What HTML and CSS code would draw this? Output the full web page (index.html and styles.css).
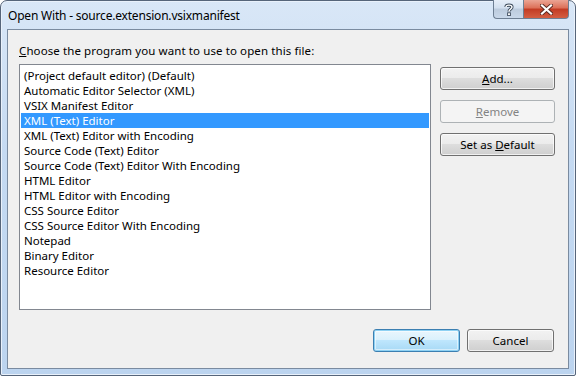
FILE: index.html
```html
<!DOCTYPE html>
<html lang="en">
<head>
    <meta charset="UTF-8">
    <title>Open With</title>
    <link rel="stylesheet" href="styles.css">
</head>
<body>
    <div class="window">
        <div class="titlebar">
            <span class="title">Open With - source.extension.vsixmanifest</span>
            <div class="caption-btns">
                <div class="cap help">
                    <svg width="10" height="13" viewBox="0 0 10 13">
                        <path d="M2 4 C2 1.5 8 1.5 8 4 C8 6 5 6 5 8.5" fill="none" stroke="#3d4b5c" stroke-width="3.2"/>
                        <path d="M2 4 C2 1.5 8 1.5 8 4 C8 6 5 6 5 8.5" fill="none" stroke="#fff" stroke-width="1.4"/>
                        <rect x="3.6" y="9.8" width="2.8" height="2.8" fill="#fff" stroke="#3d4b5c" stroke-width="0.9"/>
                    </svg>
                </div>
                <div class="cap close">
                    <svg width="13" height="11" viewBox="0 0 13 11">
                        <path d="M2 1.5 L11 9.5 M11 1.5 L2 9.5" stroke="#5a2a22" stroke-width="4" stroke-linecap="square"/>
                        <path d="M2 1.5 L11 9.5 M11 1.5 L2 9.5" stroke="#fff" stroke-width="2.2" stroke-linecap="square"/>
                    </svg>
                </div>
            </div>
        </div>

        <div class="client">
            <div class="prompt"><u>C</u>hoose the program you want to use to open this file:</div>

            <div class="main">
                <ul class="listbox">
                    <li>(Project default editor) (Default)</li>
                    <li>Automatic Editor Selector (XML)</li>
                    <li>VSIX Manifest Editor</li>
                    <li class="selected">XML (Text) Editor</li>
                    <li>XML (Text) Editor with Encoding</li>
                    <li>Source Code (Text) Editor</li>
                    <li>Source Code (Text) Editor With Encoding</li>
                    <li>HTML Editor</li>
                    <li>HTML Editor with Encoding</li>
                    <li>CSS Source Editor</li>
                    <li>CSS Source Editor With Encoding</li>
                    <li>Notepad</li>
                    <li>Binary Editor</li>
                    <li>Resource Editor</li>
                </ul>

                <div class="side">
                    <button class="btn"><u>A</u>dd...</button>
                    <button class="btn disabled"><u>R</u>emove</button>
                    <button class="btn">Set as <u>D</u>efault</button>
                </div>
            </div>

            <div class="footer">
                <button class="btn default">OK</button>
                <button class="btn">Cancel</button>
            </div>
        </div>
    </div>
</body>
</html>
```

FILE: styles.css
```css
* {
    margin: 0;
    padding: 0;
    box-sizing: border-box;
}

body {
    width: 576px;
    height: 376px;
    background: #fff;
    font-family: "Noto Sans", "Open Sans", sans-serif;
    font-size: 11.5px;
    color: #000;
    overflow: hidden;
}

.window {
    width: 576px;
    height: 376px;
    border: 1px solid #56657a;
    border-radius: 7px 7px 2px 2px;
    background: linear-gradient(to bottom, #d9e7f7 0%, #c5daf2 40%, #bcd4ef 100%);
    padding: 0 6px 6px 6px;
    display: flex;
    flex-direction: column;
    box-shadow: inset 0 0 0 1px #e9f1fb;
}

.titlebar {
    height: 28px;
    display: flex;
    align-items: flex-start;
}

.title {
    margin-top: 7px;
    margin-left: 1px;
    line-height: 15px;
    font-size: 12px;
    letter-spacing: -0.2px;
}

.caption-btns {
    margin-left: auto;
    display: flex;
    margin-top: -1px;
}

.cap {
    height: 19px;
    border: 1px solid #6e7f93;
    border-top: none;
    display: flex;
    align-items: center;
    justify-content: center;
}

.help {
    width: 30px;
    border-radius: 0 0 0 4px;
    border-right: none;
    background: linear-gradient(to bottom, #e6eef8 0%, #d3e0ef 45%, #bccbdd 50%, #c9d8ea 100%);
}

.close {
    width: 46px;
    border-radius: 0 0 4px 0;
    background: linear-gradient(to bottom, #eba594 0%, #dc6f57 45%, #c23b23 50%, #d45e42 100%);
}

.client {
    flex: 1;
    background: #f0f0f0;
    border: 1px solid #7a8ba0;
    padding: 13px 13px 0 11px;
    display: flex;
    flex-direction: column;
}

.prompt {
    line-height: 15px;
    letter-spacing: 0.1px;
}

.main {
    display: flex;
    margin-top: 6px;
}

.listbox {
    list-style: none;
    width: 412px;
    height: 246px;
    background: #fff;
    border: 1px solid #828790;
    padding: 3px 1px;
}

.listbox li {
    height: 15px;
    line-height: 15px;
    padding-left: 3px;
    white-space: nowrap;
}

.listbox li.selected {
    background: #3399ff;
    color: #fff;
}

.side {
    display: flex;
    flex-direction: column;
    gap: 10px;
    margin-left: 9px;
    padding-top: 3px;
}

.btn {
    width: 115px;
    height: 23px;
    font-family: inherit;
    font-size: inherit;
    color: #000;
    border: 1px solid #707070;
    border-radius: 3px;
    background: linear-gradient(to bottom, #f2f2f2 0%, #ebebeb 49%, #dddddd 50%, #cfcfcf 100%);
    box-shadow: inset 0 0 0 1px rgba(255, 255, 255, 0.7);
}

.btn.disabled {
    border-color: #adb2b5;
    background: #f4f4f4;
    color: #838383;
    box-shadow: none;
}

.footer {
    display: flex;
    justify-content: flex-end;
    gap: 7px;
    margin-top: 19px;
    padding-right: 1px;
}

.footer .btn {
    width: 87px;
}

.btn.default {
    border-color: #3c7fb1;
    background: linear-gradient(to bottom, #eaf6fd 0%, #d9f0fc 49%, #bee6fd 50%, #a7d9f5 100%);
    box-shadow: inset 0 0 0 1px #8ed1f3, inset 0 0 0 2px rgba(255, 255, 255, 0.5);
}
```
